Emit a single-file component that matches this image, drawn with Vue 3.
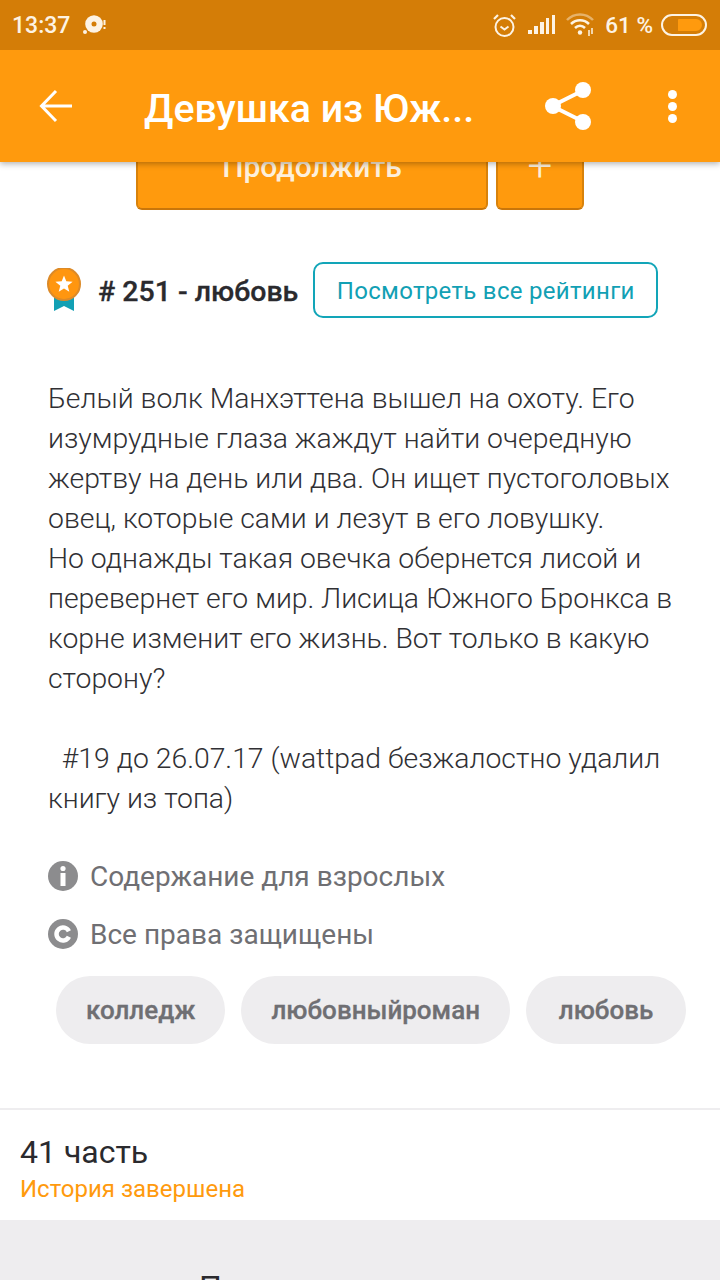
<template>
  <main class="screen">
    <header class="top">
      <div class="status">
        <span class="clock">13:37</span>
        <svg class="disc" width="30" height="26" viewBox="0 0 30 26">
          <circle cx="11" cy="12" r="8.800" fill="#fdf3e4" />
          <circle cx="11" cy="12" r="2.500" fill="#d47d07" />
          <circle cx="2" cy="20" r="2" fill="#fdf3e4" />
          <rect x="20.500" y="8" width="2" height="5" fill="#fdf3e4" />
          <rect x="20.500" y="15" width="2" height="2" fill="#fdf3e4" />
        </svg>
        <span class="spacer"></span>
        <svg width="23" height="25" viewBox="0 0 23 25" fill="none" stroke="#fdf3e4">
          <circle cx="11.500" cy="14" r="9" stroke-width="2" />
          <path d="M7.500 13.500l4 3 4-3" stroke-width="2" />
          <path d="M1 6l4-4M22 6l-4-4" stroke-width="2.200" />
        </svg>
        <svg class="signal" width="28" height="20" viewBox="0 0 28 20" fill="#fdf3e4">
          <rect x="0" y="15" width="4" height="4" />
          <rect x="6" y="11" width="4" height="8" />
          <rect x="12" y="7" width="4" height="12" />
          <rect x="18" y="3" width="3" height="16" />
          <rect x="24" y="0" width="3" height="19" />
        </svg>
        <svg class="wifi" width="28" height="24" viewBox="0 0 28 24" fill="none" stroke="#fdf3e4">
          <path d="M1 7C8-0.500 20-0.500 27 7" stroke-width="2.500" opacity=".45" />
          <path d="M5 11C10 6 18 6 23 11" stroke-width="2.500" />
          <path d="M9 15C12 12 16 12 19 15" stroke-width="2.500" />
          <circle cx="14" cy="19.500" r="2.200" fill="#fdf3e4" stroke="none" />
          <path d="M23 17v6M26 15v6" stroke-width="1.500" />
        </svg>
        <span class="battery-text">61 %</span>
        <span class="battery"><span class="battery-fill"></span></span>
      </div>
      <div class="toolbar">
        <svg class="back" width="34" height="34" viewBox="0 0 34 34" fill="none" stroke="#fff" stroke-width="3">
          <path d="M33 17H3M17 2L2.500 17L17 32" />
        </svg>
        <h1>Девушка из Юж...</h1>
        <svg class="share" width="48" height="48" viewBox="0 0 48 48">
          <path d="M8 24L40 8M8 24L40 40" stroke="#fff" stroke-width="4" />
          <circle cx="9" cy="24" r="8" fill="#fff" />
          <circle cx="39" cy="8" r="8" fill="#fff" />
          <circle cx="39" cy="40" r="8" fill="#fff" />
        </svg>
        <div class="dots"><i></i><i></i><i></i></div>
      </div>
    </header>

    <section class="content">
      <div class="actions">
        <button class="read">Продолжить</button>
        <button class="add">+</button>
      </div>

      <div class="rating">
        <svg class="medal" width="36" height="44" viewBox="0 0 36 44">
          <path d="M8 28h20v15l-10-5-10 5z" fill="#12a0b4" />
          <circle cx="18" cy="16" r="16" fill="#ff960f" stroke="#dc8a28" stroke-width="2" />
          <path d="M18 7.500L20.300 13.300L26.600 13.700L21.700 17.700L23.300 23.800L18 20.400L12.700 23.800L14.300 17.700L9.400 13.700L15.700 13.300z" fill="#fff" />
        </svg>
        <span class="rank"># 251 - любовь</span>
        <button class="all">Посмотреть все рейтинги</button>
      </div>

      <p class="desc">{{ description }}</p>

      <div class="meta meta-first">
        <svg width="30" height="30" viewBox="0 0 30 30">
          <circle cx="15" cy="15" r="15" fill="#8c8c8e" />
          <circle cx="15" cy="7.500" r="2.600" fill="#fff" />
          <rect x="12.500" y="12" width="5" height="13" fill="#fff" />
        </svg>
        <span>Содержание для взрослых</span>
      </div>
      <div class="meta">
        <svg width="30" height="30" viewBox="0 0 30 30">
          <circle cx="15" cy="15" r="15" fill="#8c8c8e" />
          <path d="M20.900 12.250A6.500 6.500 0 1 0 20.900 17.750" fill="none" stroke="#fff" stroke-width="4.500" />
        </svg>
        <span>Все права защищены</span>
      </div>

      <div class="tags">
        <span v-for="tag in tags" :key="tag" class="tag">{{ tag }}</span>
      </div>
    </section>

    <section class="parts">
      <div class="count">41 часть</div>
      <div class="done">История завершена</div>
    </section>

    <section class="more">
      <h2>П</h2>
    </section>
  </main>
</template>

<script setup>
const description = `Белый волк Манхэттена вышел на охоту. Его изумрудные глаза жаждут найти очередную жертву на день или два. Он ищет пустоголовых овец, которые сами и лезут в его ловушку.
Но однажды такая овечка обернется лисой и перевернет его мир. Лисица Южного Бронкса в корне изменит его жизнь. Вот только в какую сторону?

  #19 до 26.07.17 (wattpad безжалостно удалил книгу из топа)`

const tags = ['колледж', 'любовныйроман', 'любовь']
</script>

<style scoped>
* {
  box-sizing: border-box;
}

.screen {
  width: 720px;
  height: 1280px;
  overflow: hidden;
  background: #fff;
  font-family: Roboto, "Liberation Sans", sans-serif;
  color: #2a2a2e;
}

.top {
  position: relative;
  z-index: 2;
  box-shadow: 0 2px 6px rgba(0, 0, 0, 0.3);
}

.status {
  height: 50px;
  display: flex;
  align-items: center;
  padding: 0 13px 0 12px;
  background: #d47d07;
  color: #fdf3e4;
}

.clock {
  font-size: 23px;
  font-weight: 500;
}

.disc {
  margin-left: 13px;
}

.spacer {
  flex: 1;
}

.signal {
  margin-left: 12px;
}

.wifi {
  margin-left: 10px;
}

.battery-text {
  margin-left: 11px;
  font-size: 22.500px;
  font-weight: 500;
}

.battery {
  width: 46px;
  height: 22px;
  margin-left: 8px;
  padding: 3px;
  display: flex;
  justify-content: flex-end;
  border: 2px solid #fdf3e4;
  border-radius: 11px;
}

.battery-fill {
  width: 24px;
  background: #ff9a0d;
  border-radius: 1px 7px 7px 1px;
}

.toolbar {
  height: 112px;
  display: flex;
  align-items: center;
  padding-left: 39px;
  background: #ff9a0d;
  color: #fff;
}

.toolbar h1 {
  width: 340px;
  margin: 6px 0 0 71px;
  font-size: 39.300px;
  font-weight: 500;
  white-space: nowrap;
}

.share {
  margin-left: 60px;
}

.dots {
  display: flex;
  flex-direction: column;
  gap: 3px;
  margin-left: 76px;
}

.dots i {
  width: 9px;
  height: 9px;
  border-radius: 50%;
  background: #fff;
}

.content {
  padding: 0 34px 64px 48px;
  margin-top: -40px;
}

.actions {
  display: flex;
  justify-content: center;
  gap: 8px;
  margin-left: -48px;
  margin-right: -34px;
}

.actions button {
  height: 88px;
  padding: 2px 0 0;
  border: 0;
  border-bottom: 2px solid #c9760a;
  border-left: 2px solid #d8820b;
  border-right: 2px solid #d8820b;
  border-radius: 6px;
  background: #ff9a0d;
  color: #fdf0dc;
  font-family: inherit;
  font-size: 30px;
  font-weight: 500;
}

.read {
  width: 352px;
}

.add {
  width: 88px;
  font-size: 44px !important;
  font-weight: 300 !important;
}

.rating {
  display: flex;
  align-items: center;
  margin-top: 52px;
  height: 56px;
}

.medal {
  margin-left: -2px;
}

.rank {
  margin-left: 16px;
  padding-top: 2px;
  font-size: 28.500px;
  font-weight: 500;
  white-space: nowrap;
  -webkit-text-stroke: 0.3px #2a2a2e;
}

.all {
  flex: none;
  width: 345px;
  height: 56px;
  margin-left: 15px;
  padding: 2px 0 0;
  border: 2px solid #12a5b8;
  border-radius: 10px;
  background: #fff;
  color: #12a0b4;
  font-family: inherit;
  font-size: 24px;
  letter-spacing: 0.3px;
}

.desc {
  width: 628px;
  margin: 61px 0 0;
  font-size: 28.350px;
  font-weight: 300;
  line-height: 40px;
  white-space: pre-wrap;
  color: #303034;
}

.meta {
  display: flex;
  align-items: center;
  gap: 12px;
  height: 30px;
  margin-top: 28px;
  font-size: 28px;
  color: #6f6f73;
}

.meta-first {
  margin-top: 42px;
}

.tags {
  display: flex;
  gap: 16px;
  margin: 27px 0 0 8px;
}

.tag {
  height: 68px;
  min-width: 160px;
  padding: 0 30px;
  display: flex;
  align-items: center;
  justify-content: center;
  border-radius: 34px;
  background: #eeedef;
  color: #6f6f73;
  font-size: 26px;
  font-weight: 500;
  -webkit-text-stroke: 0.3px #6f6f73;
}

.parts {
  height: 112px;
  padding: 22px 20px 0;
  border-top: 2px solid #eeedef;
}

.count {
  font-size: 32px;
  line-height: 40px;
}

.done {
  margin-top: 2px;
  font-size: 24px;
  line-height: 30px;
  color: #ff9a0d;
}

.more {
  height: 60px;
  padding: 51px 0 0 199px;
  background: #eeedef;
}

.more h2 {
  margin: 0;
  font-size: 32px;
  font-weight: 400;
  line-height: 32px;
}
</style>
